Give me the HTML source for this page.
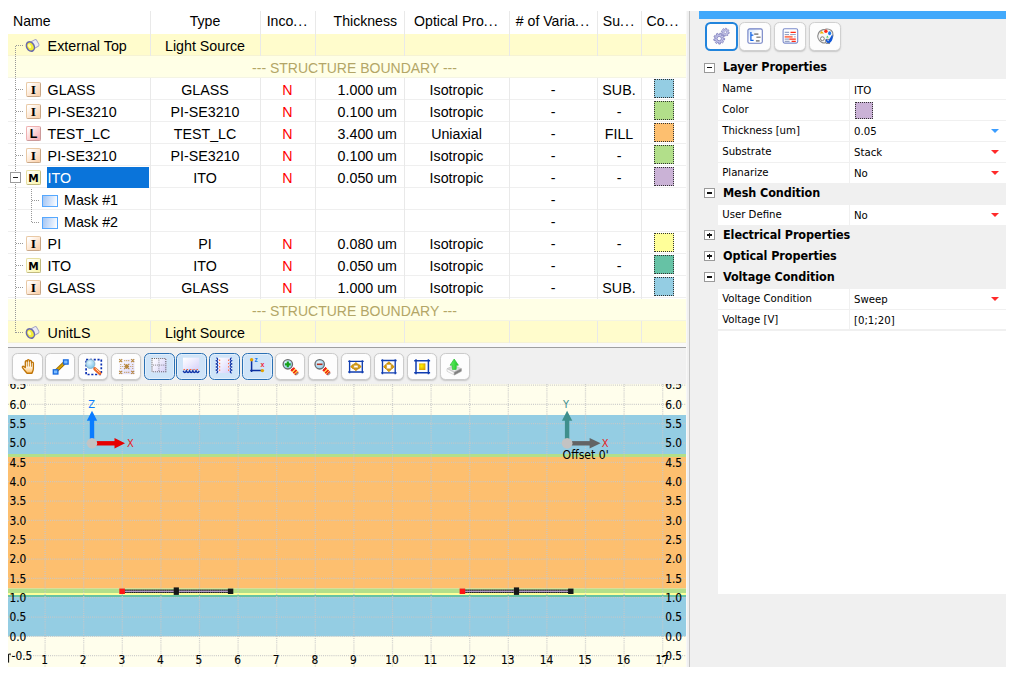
<!DOCTYPE html>
<html><head><meta charset="utf-8"><title>Layer Editor</title>
<style>
html,body{margin:0;padding:0;background:#fff;}
body{width:1016px;height:675px;position:relative;overflow:hidden;font-family:"Liberation Sans",sans-serif;}
div,span{box-sizing:border-box;}
.abs{position:absolute;}
#tbl{position:absolute;left:8px;top:11px;width:677.5px;height:331.6px;background:#fff;font-size:14.25px;color:#000;overflow:hidden;}
.hd{position:absolute;top:0;height:23px;line-height:21px;font-size:14.1px;text-align:center;white-space:nowrap;}
.vs{position:absolute;top:0;width:1px;height:331.6px;background:#e9e9e9;}
.row{position:absolute;left:0;width:677.5px;height:22.03px;border-bottom:1px solid #efefef;line-height:24.4px;white-space:nowrap;}
.row.y1{background:#fffccc;border-bottom-color:#f6f3d4;}
.row.y2{background:#ffffe6;border-bottom-color:#f4f4e4;}
.c{position:absolute;top:0;height:21px;text-align:center;}
.n{color:#ff0000;}
.sb{color:#b3a667;font-size:14px;}
.sw{position:absolute;left:646px;top:1px;width:20px;height:19px;border:1px dotted #333;}
.ic{position:absolute;left:18px;top:4px;width:15px;height:15px;border:1px solid #e9c9a5;border-right-color:#c9a787;border-bottom-color:#c9a787;border-radius:2px;font:bold 13.5px/13.8px "Liberation Serif",serif;text-align:center;color:#000;}
.ic.i{background:linear-gradient(135deg,#ffffff 10%,#fbd3ae 90%);}
.ic.l{background:linear-gradient(135deg,#ffffff 5%,#f7b1b5 90%);border-color:#efb0b0;border-right-color:#c99;border-bottom-color:#c99;font:bold 12.5px/14.6px "Liberation Sans",sans-serif;}
.ic.m{background:linear-gradient(135deg,#ffffff 5%,#fbf7b0 90%);border-color:#e6dfa0;border-right-color:#c2bb80;border-bottom-color:#c2bb80;font:bold 10.5px/14px "DejaVu Sans","Liberation Sans",sans-serif;}
.mk{position:absolute;left:34px;top:6.4px;width:16px;height:12px;border:1px solid #55a8ff;background:linear-gradient(100deg,#a4c6f4 0%,#d4e4fb 55%,#ffffff 100%);}
.nm{position:absolute;left:39.6px;top:0;font-size:14.3px;}
.e{letter-spacing:1.1px;}
.dotv{position:absolute;width:1px;background:repeating-linear-gradient(to bottom,#989898 0,#989898 1px,transparent 1px,transparent 2px);}
.doth{position:absolute;height:1px;background:repeating-linear-gradient(to right,#989898 0,#989898 1px,transparent 1px,transparent 2px);}
/* toolbar */
#tb{position:absolute;left:8px;top:348px;width:677.7px;height:36px;background:#f0f0f0;}
.bt{position:absolute;top:5.3px;width:30.2px;height:26.4px;border:1px solid #cbcbcb;border-radius:5.5px;background:#fdfdfd;box-shadow:0 1px 1.5px #c8c8c8;}
.bt.on{background:#cfe4f8;border:1.9px solid #2a70b4;box-shadow:inset 0 0 0 1px #e3effb;top:5.1px;width:31px;height:26.8px;}
.bt svg{position:absolute;left:0;top:0;}
/* right panel */
#rp{position:absolute;left:690px;top:11px;width:316px;height:656px;background:#f0f0f0;font-family:"DejaVu Sans Condensed","DejaVu Sans","Liberation Sans",sans-serif;font-stretch:condensed;font-size:11.5px;color:#000;}
.pr{position:absolute;left:28px;width:288px;height:19.8px;background:#fff;line-height:19.2px;white-space:nowrap;font-size:11.3px;}
.pr .k{position:absolute;left:4.2px;top:0;}
.pr .v{position:absolute;left:136px;top:1.4px;}
.pr .sep{position:absolute;left:131px;top:0;width:1.2px;height:21px;background:#f0f0f0;}
.ph{position:absolute;left:33px;height:19px;line-height:18.4px;font-weight:bold;font-size:12.5px;white-space:nowrap;letter-spacing:-0.08px;}
.pm{position:absolute;left:14.3px;width:10.4px;height:10.2px;border:1px solid #9a9a9a;background:#fff;}
.pm i{position:absolute;left:1.7px;top:3.4px;width:5px;height:1.5px;background:#111;}
.pm b{position:absolute;left:3.5px;top:1.6px;width:1.4px;height:5px;background:#111;}
.tri{position:absolute;left:302px;width:0;height:0;border-left:4.1px solid transparent;border-right:4.1px solid transparent;border-top:4.9px solid #ff2a2a;}
.rb{position:absolute;top:11px;width:32px;height:28.8px;border:1px solid #d0d0d0;border-radius:5.5px;background:#fdfdfd;box-shadow:0 1px 1.5px #c8c8c8;}
</style></head><body>
<div id="tbl">
<div class="hd" style="left:0px;width:142px;text-align:left;padding-left:5px">Name</div>
<div class="hd" style="left:142px;width:110px">Type</div>
<div class="hd" style="left:252px;width:55px">Inco<span class="e">...</span></div>
<div class="hd" style="left:307px;width:82px;text-align:right">Thickness</div>
<div class="hd" style="left:396px;width:105px">Optical Pro<span class="e">...</span></div>
<div class="hd" style="left:501px;width:88px"># of Varia<span class="e">...</span></div>
<div class="hd" style="left:589px;width:44px">Su<span class="e">...</span></div>
<div class="hd" style="left:633px;width:44px">Co<span class="e">...</span></div>
<div class="row y1" style="top:23.15px"><svg class="abs" style="left:17px;top:3px" width="16" height="16" viewBox="0 0 16 16"><g transform="rotate(-30 8 8)"><rect x="4.5" y="4.3" width="9" height="7.4" rx="1.6" fill="#ebebf3" stroke="#a2a2c6" stroke-width="0.9"/><ellipse cx="5" cy="8" rx="3.7" ry="4.9" fill="#f2ec38" stroke="#6a6aac" stroke-width="1.5"/><ellipse cx="4.4" cy="7.2" rx="1.4" ry="2.2" fill="#fffcae"/></g></svg><span class="nm">External Top</span><div class="c" style="left:142px;width:110px">Light Source</div><div class="c n" style="left:252px;width:55px"></div><div class="c" style="left:307px;width:82px;text-align:right"></div><div class="c" style="left:396px;width:105px"></div><div class="c" style="left:501px;width:88px"></div><div class="c" style="left:589px;width:44px"></div></div>
<div class="row y2" style="top:45.18px"><div class="c sb" style="left:16px;width:661px">--- STRUCTURE BOUNDARY ---</div></div>
<div class="row " style="top:67.21px"><span class="ic i">I</span><span class="nm">GLASS</span><div class="c" style="left:142px;width:110px">GLASS</div><div class="c n" style="left:252px;width:55px">N</div><div class="c" style="left:307px;width:82px;text-align:right">1.000 um</div><div class="c" style="left:396px;width:105px">Isotropic</div><div class="c" style="left:501px;width:88px">-</div><div class="c" style="left:589px;width:44px">SUB.</div><span class="sw" style="background:#94cde3"></span></div>
<div class="row " style="top:89.24px"><span class="ic i">I</span><span class="nm">PI-SE3210</span><div class="c" style="left:142px;width:110px">PI-SE3210</div><div class="c n" style="left:252px;width:55px">N</div><div class="c" style="left:307px;width:82px;text-align:right">0.100 um</div><div class="c" style="left:396px;width:105px">Isotropic</div><div class="c" style="left:501px;width:88px">-</div><div class="c" style="left:589px;width:44px">-</div><span class="sw" style="background:#b2df8a"></span></div>
<div class="row " style="top:111.27px"><span class="ic l">L</span><span class="nm">TEST_LC</span><div class="c" style="left:142px;width:110px">TEST_LC</div><div class="c n" style="left:252px;width:55px">N</div><div class="c" style="left:307px;width:82px;text-align:right">3.400 um</div><div class="c" style="left:396px;width:105px">Uniaxial</div><div class="c" style="left:501px;width:88px">-</div><div class="c" style="left:589px;width:44px">FILL</div><span class="sw" style="background:#fdbf6f"></span></div>
<div class="row " style="top:133.3px"><span class="ic i">I</span><span class="nm">PI-SE3210</span><div class="c" style="left:142px;width:110px">PI-SE3210</div><div class="c n" style="left:252px;width:55px">N</div><div class="c" style="left:307px;width:82px;text-align:right">0.100 um</div><div class="c" style="left:396px;width:105px">Isotropic</div><div class="c" style="left:501px;width:88px">-</div><div class="c" style="left:589px;width:44px">-</div><span class="sw" style="background:#b2df8a"></span></div>
<div class="row " style="top:155.33px"><span class="ic m">M</span><span class="abs" style="left:39px;top:1px;width:102px;height:21px;background:#0a74da"></span><span class="nm" style="color:#fff">ITO</span><div class="c" style="left:142px;width:110px">ITO</div><div class="c n" style="left:252px;width:55px">N</div><div class="c" style="left:307px;width:82px;text-align:right">0.050 um</div><div class="c" style="left:396px;width:105px">Isotropic</div><div class="c" style="left:501px;width:88px">-</div><div class="c" style="left:589px;width:44px">-</div><span class="sw" style="background:#cab2d6"></span></div>
<div class="row " style="top:177.36px"><span class="mk"></span><span class="nm" style="left:56px">Mask #1</span><div class="c" style="left:142px;width:110px"></div><div class="c n" style="left:252px;width:55px"></div><div class="c" style="left:307px;width:82px;text-align:right"></div><div class="c" style="left:396px;width:105px"></div><div class="c" style="left:501px;width:88px">-</div><div class="c" style="left:589px;width:44px"></div></div>
<div class="row " style="top:199.39px"><span class="mk"></span><span class="nm" style="left:56px">Mask #2</span><div class="c" style="left:142px;width:110px"></div><div class="c n" style="left:252px;width:55px"></div><div class="c" style="left:307px;width:82px;text-align:right"></div><div class="c" style="left:396px;width:105px"></div><div class="c" style="left:501px;width:88px">-</div><div class="c" style="left:589px;width:44px"></div></div>
<div class="row " style="top:221.42px"><span class="ic i">I</span><span class="nm">PI</span><div class="c" style="left:142px;width:110px">PI</div><div class="c n" style="left:252px;width:55px">N</div><div class="c" style="left:307px;width:82px;text-align:right">0.080 um</div><div class="c" style="left:396px;width:105px">Isotropic</div><div class="c" style="left:501px;width:88px">-</div><div class="c" style="left:589px;width:44px">-</div><span class="sw" style="background:#ffff99"></span></div>
<div class="row " style="top:243.45px"><span class="ic m">M</span><span class="nm">ITO</span><div class="c" style="left:142px;width:110px">ITO</div><div class="c n" style="left:252px;width:55px">N</div><div class="c" style="left:307px;width:82px;text-align:right">0.050 um</div><div class="c" style="left:396px;width:105px">Isotropic</div><div class="c" style="left:501px;width:88px">-</div><div class="c" style="left:589px;width:44px">-</div><span class="sw" style="background:#66c2a5"></span></div>
<div class="row " style="top:265.48px"><span class="ic i">I</span><span class="nm">GLASS</span><div class="c" style="left:142px;width:110px">GLASS</div><div class="c n" style="left:252px;width:55px">N</div><div class="c" style="left:307px;width:82px;text-align:right">1.000 um</div><div class="c" style="left:396px;width:105px">Isotropic</div><div class="c" style="left:501px;width:88px">-</div><div class="c" style="left:589px;width:44px">SUB.</div><span class="sw" style="background:#94cde3"></span></div>
<div class="row y2" style="top:287.51px"><div class="c sb" style="left:16px;width:661px">--- STRUCTURE BOUNDARY ---</div></div>
<div class="row y1" style="top:309.54px"><svg class="abs" style="left:17px;top:3px" width="16" height="16" viewBox="0 0 16 16"><g transform="rotate(-30 8 8)"><rect x="4.5" y="4.3" width="9" height="7.4" rx="1.6" fill="#ebebf3" stroke="#a2a2c6" stroke-width="0.9"/><ellipse cx="5" cy="8" rx="3.7" ry="4.9" fill="#f2ec38" stroke="#6a6aac" stroke-width="1.5"/><ellipse cx="4.4" cy="7.2" rx="1.4" ry="2.2" fill="#fffcae"/></g></svg><span class="nm">UnitLS</span><div class="c" style="left:142px;width:110px">Light Source</div><div class="c n" style="left:252px;width:55px"></div><div class="c" style="left:307px;width:82px;text-align:right"></div><div class="c" style="left:396px;width:105px"></div><div class="c" style="left:501px;width:88px"></div><div class="c" style="left:589px;width:44px"></div></div>
<div class="vs" style="left:141.5px;top:0.00px;height:45.18px"></div><div class="vs" style="left:141.5px;top:67.21px;height:220.30px"></div><div class="vs" style="left:141.5px;top:309.54px;height:22.03px"></div><div class="vs" style="left:251.5px;top:0.00px;height:45.18px"></div><div class="vs" style="left:251.5px;top:67.21px;height:220.30px"></div><div class="vs" style="left:251.5px;top:309.54px;height:22.03px"></div><div class="vs" style="left:306.5px;top:0.00px;height:45.18px"></div><div class="vs" style="left:306.5px;top:67.21px;height:220.30px"></div><div class="vs" style="left:306.5px;top:309.54px;height:22.03px"></div><div class="vs" style="left:395.5px;top:0.00px;height:45.18px"></div><div class="vs" style="left:395.5px;top:67.21px;height:220.30px"></div><div class="vs" style="left:395.5px;top:309.54px;height:22.03px"></div><div class="vs" style="left:500.5px;top:0.00px;height:45.18px"></div><div class="vs" style="left:500.5px;top:67.21px;height:220.30px"></div><div class="vs" style="left:500.5px;top:309.54px;height:22.03px"></div><div class="vs" style="left:588.5px;top:0.00px;height:45.18px"></div><div class="vs" style="left:588.5px;top:67.21px;height:220.30px"></div><div class="vs" style="left:588.5px;top:309.54px;height:22.03px"></div><div class="vs" style="left:632.5px;top:0.00px;height:45.18px"></div><div class="vs" style="left:632.5px;top:67.21px;height:220.30px"></div><div class="vs" style="left:632.5px;top:309.54px;height:22.03px"></div>
<div class="dotv" style="left:7px;top:35px;height:287px"></div><div class="doth" style="left:8px;top:34px;width:8px"></div><div class="doth" style="left:8px;top:321px;width:8px"></div><div class="doth" style="left:8px;top:78px;width:7px"></div><div class="doth" style="left:8px;top:100px;width:7px"></div><div class="doth" style="left:8px;top:122px;width:7px"></div><div class="doth" style="left:8px;top:144px;width:7px"></div><div class="doth" style="left:8px;top:232px;width:7px"></div><div class="doth" style="left:8px;top:254px;width:7px"></div><div class="doth" style="left:8px;top:276px;width:7px"></div><div class="dotv" style="left:23px;top:178px;height:33px"></div><div class="doth" style="left:24px;top:189px;width:8px"></div><div class="doth" style="left:24px;top:211px;width:8px"></div><div class="abs" style="left:2px;top:161px;width:11px;height:11px;border:1px solid #9b9b9b;background:#fff"><i class="abs" style="left:2px;top:4px;width:5px;height:1px;background:#222"></i></div></div>
<div class="abs" style="left:8px;top:342.6px;width:677.5px;height:4.4px;background:#f9f9f9"></div><div class="abs" style="left:8px;top:346.5px;width:678px;height:1.2px;background:#9f9f9f"></div>
<div id="tb">
<div class="bt" style="left:4.4px"><svg style="left:-0.64px;top:-0.50px" width="30" height="26" viewBox="0 0 30 26"><defs><linearGradient id="gh" x1="0" y1="0" x2="0" y2="1"><stop offset="0" stop-color="#fff"/><stop offset="0.55" stop-color="#fff3e0"/><stop offset="1" stop-color="#ffc060"/></linearGradient></defs><path transform="translate(8.6,5.4) scale(0.95)" d="M3.9 8.6V2.4a1.05 1.05 0 0 1 2.1 0V1.3a1.1 1.1 0 0 1 2.2 0V2.1a1.1 1.1 0 0 1 2.2 0V3.8a1 1 0 0 1 2 0V9.6c0 2.2-1 3.4-1.5 5H5.6C4.6 12.8 2.3 11 .9 8.7c-.6-1.2.7-1.9 1.6-1.1Z" fill="url(#gh)" stroke="#bf7408" stroke-width="1.4" stroke-linejoin="round"/><path transform="translate(8.6,5.4) scale(0.95)" d="M6 2.4V7.5M8.2 2V7.5M10.4 3.5V7.8" stroke="#c47a0c" stroke-width="0.9" fill="none"/></svg></div>
<div class="bt" style="left:37.3px"><svg style="left:-0.70px;top:-0.50px" width="30" height="26" viewBox="0 0 30 26"><path d="M9.3 17.8L19.6 7.7" stroke="#9c6a00" stroke-width="3.6"/><path d="M9.3 17.8L19.6 7.7" stroke="#dba400" stroke-width="1.7"/><rect x="17.5" y="5.9" width="4.6" height="4.2" fill="#7cbcff" stroke="#1568de" stroke-width="1.3"/><rect x="7.3" y="15.8" width="4.6" height="4.2" fill="#7cbcff" stroke="#1568de" stroke-width="1.3"/></svg></div>
<div class="bt" style="left:70.1px"><svg style="left:-0.36px;top:-0.50px" width="30" height="26" viewBox="0 0 30 26"><defs><radialGradient id="gg" cx="0.4" cy="0.35" r="0.7"><stop offset="0" stop-color="#e4f7ff"/><stop offset="1" stop-color="#79c2e8"/></radialGradient></defs><rect x="7.1" y="5.6" width="15.2" height="14.9" fill="#fff" stroke="#0a2fb2" stroke-width="1.7" stroke-dasharray="2.1 1.7"/><path d="M14.2 13.2L16.4 15.2" stroke="#999" stroke-width="1.6"/><path d="M16 14.9L20.8 19.3" stroke="#ee6a2a" stroke-width="3.4" stroke-linecap="round"/><path d="M16.4 14.6L20.8 18.5" stroke="#ffe0b0" stroke-width="1"/><circle cx="11.4" cy="10" r="4.5" fill="url(#gg)" stroke="#8fb3c6" stroke-width="0.9"/></svg></div>
<div class="bt" style="left:103.0px"><svg style="left:-0.18px;top:-0.50px" width="30" height="26" viewBox="0 0 30 26"><defs><linearGradient id="g4" x1="0" y1="0" x2="1" y2="1"><stop offset="0" stop-color="#fdfdff"/><stop offset="1" stop-color="#dcd8fa"/></linearGradient></defs><rect x="7" y="5" width="15.4" height="15.2" fill="url(#g4)"/><path d="M7.199999999999999 5.2L10.2 8.2M10.2 5.2L7.199999999999999 8.2M7.199999999999999 16.9L10.2 19.9M10.2 16.9L7.199999999999999 19.9M19.2 5.2L22.2 8.2M22.2 5.2L19.2 8.2M19.2 16.9L22.2 19.9M22.2 16.9L19.2 19.9M12.1 9.9L17.3 15.1M17.3 9.9L12.1 15.1M12.3 12.5H17.1M14.7 10.1V14.9" stroke="#ad7417" stroke-width="1.1" fill="none" opacity="0.85"/><path d="M12.1 6.7h1.2M14.1 6.7h1.2M16.099999999999998 6.7h1.2M12.1 18.4h1.2M14.1 18.4h1.2M16.099999999999998 18.4h1.2M8.1 10.5h1.2M8.1 12.5h1.2M8.1 14.5h1.2M20.099999999999998 10.5h1.2M20.099999999999998 12.5h1.2M20.099999999999998 14.5h1.2M10.1 12.5h1.2M18.099999999999998 12.5h1.2" stroke="#b98a3c" stroke-width="1.2" opacity="0.7"/></svg></div>
<div class="bt on" style="left:135.9px"><svg style="left:-2.08px;top:-1.90px" width="31" height="27" viewBox="0 0 31 27"><defs><linearGradient id="g5" x1="0" y1="0" x2="1" y2="0.6"><stop offset="0" stop-color="#ffffff"/><stop offset="0.45" stop-color="#f2f0fe"/><stop offset="1" stop-color="#d9d5f8"/></linearGradient></defs><rect x="8.4" y="5.9" width="15" height="14.4" fill="url(#g5)"/><rect x="9" y="6.5" width="13.8" height="13.2" fill="none" stroke="#4a4a4a" stroke-width="1.15" stroke-dasharray="1.05 1" opacity="0.8"/><path d="M15.9 7.6V19M10 13.1H22" stroke="#5a5a5a" stroke-width="1.1" stroke-dasharray="1.05 1" opacity="0.55"/></svg></div>
<div class="bt on" style="left:168.1px"><svg style="left:-1.20px;top:-1.90px" width="31" height="27" viewBox="0 0 31 27"><defs><linearGradient id="g6" x1="0" y1="0" x2="1" y2="1"><stop offset="0" stop-color="#ffffff"/><stop offset="0.4" stop-color="#f0eefe"/><stop offset="1" stop-color="#d5d1f8"/></linearGradient></defs><rect x="7" y="5.7" width="16.2" height="12" fill="url(#g6)"/><rect x="7.6" y="17" width="1.3" height="1.1" fill="#ff5a2a"/><rect x="10.8" y="17" width="1.3" height="1.1" fill="#ff5a2a"/><rect x="14.1" y="17" width="1.3" height="1.1" fill="#ff5a2a"/><rect x="17.4" y="17" width="1.3" height="1.1" fill="#ff5a2a"/><rect x="20.6" y="17" width="1.3" height="1.1" fill="#ff5a2a"/><path d="M7.2 18.9q1.6 3.2 3.2 0q1.6 3.2 3.2 0q1.6 3.2 3.2 0q1.6 3.2 3.2 0q1.6 3.2 3.2 0" stroke="#0f35a8" stroke-width="1.5" fill="#fff"/></svg></div>
<div class="bt on" style="left:201.0px"><svg style="left:-1.96px;top:-1.90px" width="31" height="27" viewBox="0 0 31 27"><defs><linearGradient id="g7" x1="0" y1="0" x2="1" y2="1"><stop offset="0" stop-color="#ffffff"/><stop offset="0.4" stop-color="#f0eefe"/><stop offset="1" stop-color="#d5d1f8"/></linearGradient></defs><rect x="9" y="5.7" width="14" height="15.3" fill="url(#g7)"/><rect x="11" y="7.6" width="1.2" height="1.3" fill="#ff6a3a"/><rect x="11" y="10.9" width="1.2" height="1.3" fill="#ff6a3a"/><rect x="11" y="14.2" width="1.2" height="1.3" fill="#ff6a3a"/><rect x="11" y="17.5" width="1.2" height="1.3" fill="#ff6a3a"/><rect x="20" y="7.6" width="1.2" height="1.3" fill="#ff6a3a"/><rect x="20" y="10.9" width="1.2" height="1.3" fill="#ff6a3a"/><rect x="20" y="14.2" width="1.2" height="1.3" fill="#ff6a3a"/><rect x="20" y="17.5" width="1.2" height="1.3" fill="#ff6a3a"/><path d="M8.4 5.7q2.6 1.55 0 3.1q2.6 1.55 0 3.1q2.6 1.55 0 3.1q2.6 1.55 0 3.1q2.6 1.55 0 3.1" stroke="#0f35a8" stroke-width="1.25" fill="#fff"/><path d="M23.6 5.7q-2.6 1.55 0 3.1q-2.6 1.55 0 3.1q-2.6 1.55 0 3.1q-2.6 1.55 0 3.1q-2.6 1.55 0 3.1" stroke="#0f35a8" stroke-width="1.25" fill="#fff"/></svg></div>
<div class="bt on" style="left:233.8px"><svg style="left:-1.72px;top:-1.90px" width="31" height="27" viewBox="0 0 31 27"><path d="M10.6 7.6V20M9.2 18.6H21" stroke="#0b2fa0" stroke-width="1.5" fill="none"/><circle cx="10.6" cy="7.7" r="1.7" fill="#e3a400"/><circle cx="21.4" cy="18.6" r="1.7" fill="#e3a400"/><text x="13.6" y="9.6" font-size="6.5" font-weight="bold" font-family="Liberation Sans, sans-serif" fill="#1a7ae8">z</text><text x="19.6" y="15.2" font-size="7" font-weight="bold" font-family="Liberation Sans, sans-serif" fill="#f02838">x</text></svg></div>
<div class="bt" style="left:267.3px"><svg style="left:-0.88px;top:-0.50px" width="30" height="26" viewBox="0 0 30 26"><defs><radialGradient id="m9" cx="0.4" cy="0.35" r="0.75"><stop offset="0" stop-color="#e6f8ff"/><stop offset="1" stop-color="#82c6ea"/></radialGradient><linearGradient id="m9h" x1="0" y1="0" x2="1" y2="0"><stop offset="0" stop-color="#f6f6f6"/><stop offset="0.16" stop-color="#f6f6f6"/><stop offset="0.17" stop-color="#f02818"/><stop offset="0.36" stop-color="#f02818"/><stop offset="0.37" stop-color="#ffc848"/><stop offset="0.52" stop-color="#ffc848"/><stop offset="0.53" stop-color="#f02818"/><stop offset="0.7" stop-color="#f02818"/><stop offset="0.71" stop-color="#ffb838"/><stop offset="0.84" stop-color="#ffb838"/><stop offset="0.85" stop-color="#f02818"/><stop offset="1" stop-color="#c02010"/></linearGradient></defs><g transform="translate(14.9,12.4) rotate(46)"><rect x="0" y="-1.2" width="2.6" height="2.4" fill="#b9b9b9"/><rect x="1.9" y="-2.3" width="8.4" height="4.6" rx="0.6" fill="url(#m9h)"/><rect x="9.6" y="-1.5" width="1.6" height="3" fill="#9a9a9a"/></g><circle cx="12.8" cy="10.3" r="4.7" fill="url(#m9)" stroke="#6c6c6c" stroke-width="1.3"/><path d="M9.9 10.3H15.7M12.8 7.4V13.2" stroke="#12a018" stroke-width="2.2"/></svg></div>
<div class="bt" style="left:300.1px"><svg style="left:-1.64px;top:-0.50px" width="30" height="26" viewBox="0 0 30 26"><defs><radialGradient id="m10" cx="0.4" cy="0.35" r="0.75"><stop offset="0" stop-color="#e6f8ff"/><stop offset="1" stop-color="#82c6ea"/></radialGradient><linearGradient id="m10h" x1="0" y1="0" x2="1" y2="0"><stop offset="0" stop-color="#f6f6f6"/><stop offset="0.16" stop-color="#f6f6f6"/><stop offset="0.17" stop-color="#f02818"/><stop offset="0.36" stop-color="#f02818"/><stop offset="0.37" stop-color="#ffc848"/><stop offset="0.52" stop-color="#ffc848"/><stop offset="0.53" stop-color="#f02818"/><stop offset="0.7" stop-color="#f02818"/><stop offset="0.71" stop-color="#ffb838"/><stop offset="0.84" stop-color="#ffb838"/><stop offset="0.85" stop-color="#f02818"/><stop offset="1" stop-color="#c02010"/></linearGradient></defs><g transform="translate(14.799999999999999,12.4) rotate(46)"><rect x="0" y="-1.2" width="2.6" height="2.4" fill="#b9b9b9"/><rect x="1.9" y="-2.3" width="8.4" height="4.6" rx="0.6" fill="url(#m10h)"/><rect x="9.6" y="-1.5" width="1.6" height="3" fill="#9a9a9a"/></g><circle cx="12.7" cy="10.3" r="4.7" fill="url(#m10)" stroke="#6c6c6c" stroke-width="1.3"/><path d="M9.9 10.3H15.5" stroke="#b43222" stroke-width="1.6"/></svg></div>
<div class="bt" style="left:333.0px"><svg style="left:-1.40px;top:-0.50px" width="30" height="26" viewBox="0 0 30 26"><path d="M8.6 6.2V19.3M21.3 6.2V19.3M7.2 7.3H22.7M7.2 18H22.7" stroke="#0f3cb0" stroke-width="1.35" fill="none"/><path d="M9.7 12.6L12.3 10.3V14.9ZM20.2 12.6L17.6 10.3V14.9ZM14.9 8.5L17.1 10.6H12.7ZM14.9 16.7L17.1 14.6H12.7Z" fill="#eaa800" stroke="#b87c00" stroke-width="0.8" stroke-linejoin="round"/><rect x="12.9" y="11.5" width="4.1" height="2.2" fill="#fff" stroke="#d09000" stroke-width="0.5"/></svg></div>
<div class="bt" style="left:365.9px"><svg style="left:-1.06px;top:-0.50px" width="30" height="26" viewBox="0 0 30 26"><path d="M8.5 5.2V20.3M21.2 5.2V20.3M7.1 6.5H22.6M7.1 18.8H22.6" stroke="#0f3cb0" stroke-width="1.35" fill="none"/><path d="M9.6 12.7L12.1 10.4V15ZM20.2 12.7L17.7 10.4V15ZM14.9 7.7L17.2 10H12.6ZM14.9 17.7L17.2 15.4H12.6Z" fill="#eaa800" stroke="#b87c00" stroke-width="0.8" stroke-linejoin="round"/><rect x="12.8" y="10.6" width="4.2" height="4.2" fill="#fff" stroke="#d09000" stroke-width="0.5"/></svg></div>
<div class="bt" style="left:398.7px"><svg style="left:0.08px;top:-0.50px" width="30" height="26" viewBox="0 0 30 26"><defs><radialGradient id="g13" cx="0.4" cy="0.4" r="0.7"><stop offset="0" stop-color="#fff200"/><stop offset="1" stop-color="#d89c00"/></radialGradient></defs><path d="M8 5.2V20.3M20.4 5.2V20.3M6.2 6.8H22.1M6.2 18.8H22.1" stroke="#0f3cb0" stroke-width="1.5" fill="none"/><rect x="11.1" y="9.4" width="6.3" height="6.6" fill="url(#g13)"/></svg></div>
<div class="bt" style="left:431.6px"><svg style="left:-0.68px;top:-0.50px" width="30" height="26" viewBox="0 0 30 26"><defs><linearGradient id="g14" x1="0" y1="0" x2="1" y2="0"><stop offset="0" stop-color="#66f266"/><stop offset="1" stop-color="#1ec626"/></linearGradient></defs><path d="M7 14.7L14.2 11.2L21.3 14.7L14.3 18.5Z" fill="#d4d4d4" stroke="#bdbdbd" stroke-width="0.6"/><path d="M7 14.7L14.3 18.5V21L7 17.3Z" fill="#fafafa" stroke="#c4c4c4" stroke-width="0.6"/><path d="M14.3 18.5L21.3 14.7V17.3L14.3 21Z" fill="#7e7e7e" stroke="#909090" stroke-width="0.6"/><path d="M10.2 15.1L14.2 13.2L18 15.1L14.3 17Z" fill="#f6f6f6"/><path d="M14.2 5L18.4 11.2H16.2V15.4H12.3V11.2H10.1Z" fill="url(#g14)" stroke="#28c030" stroke-width="0.7" stroke-linejoin="round"/></svg></div>
</div>
<svg class="abs" style="left:8px;top:384px" width="678" height="283" viewBox="0 0 678 283" font-family="DejaVu Sans Condensed, DejaVu Sans, Liberation Sans, sans-serif" font-stretch="condensed">
<rect x="0" y="0" width="678" height="283" fill="#fffeec"/>
<rect x="0" y="31.0" width="678" height="39.0" fill="#94cde3"/>
<rect x="0" y="70.0" width="678" height="3.0" fill="#b2df8a"/>
<rect x="0" y="73.0" width="678" height="131.5" fill="#fdbf6f"/>
<rect x="0" y="204.5" width="678" height="4.5" fill="#b2df8a"/>
<rect x="0" y="209.0" width="678" height="2.0" fill="#ffff99"/>
<rect x="0" y="211.0" width="678" height="2.0" fill="#66c2a5"/>
<rect x="0" y="213.0" width="678" height="39.3" fill="#94cde3"/>
<path d="M37.1 0V283 M75.7 0V283 M114.3 0V283 M152.9 0V283 M191.5 0V283 M230.1 0V283 M268.7 0V283 M307.3 0V283 M345.9 0V283 M384.5 0V283 M423.1 0V283 M461.7 0V283 M500.3 0V283 M538.9 0V283 M577.5 0V283 M616.1 0V283 M654.7 0V283 M0 1.1H678 M0 20.4H678 M0 39.7H678 M0 59.0H678 M0 78.4H678 M0 97.7H678 M0 117.0H678 M0 136.3H678 M0 155.7H678 M0 175.0H678 M0 194.3H678 M0 213.6H678 M0 233.0H678 M0 252.3H678 M0 271.6H678" stroke="#c8c8c8" stroke-width="1.25" stroke-dasharray="1 1.1" fill="none" opacity="0.9"/>
<rect x="114.0" y="205.6" width="108.5" height="3.4" fill="#1a1a1a"/><rect x="114.0" y="206.7" width="108.5" height="1.2" fill="#c3a7da"/><path d="M114.0 206.2H222.5M114.0 208.4H222.5" stroke="#bbb" stroke-width="1" stroke-dasharray="1 1.2" opacity="0.55"/><rect x="111.3" y="204.5" width="5.6" height="5.5" fill="#ff1414"/><rect x="165.7" y="203.4" width="5.2" height="7.5" fill="#161616"/><rect x="219.9" y="204.6" width="5.4" height="5.4" fill="#161616"/>
<rect x="454.3" y="205.6" width="108.4" height="3.4" fill="#1a1a1a"/><rect x="454.3" y="206.7" width="108.4" height="1.2" fill="#c3a7da"/><path d="M454.3 206.2H562.7M454.3 208.4H562.7" stroke="#bbb" stroke-width="1" stroke-dasharray="1 1.2" opacity="0.55"/><rect x="451.6" y="204.5" width="5.6" height="5.5" fill="#ff1414"/><rect x="505.9" y="203.4" width="5.2" height="7.5" fill="#161616"/><rect x="560.1" y="204.6" width="5.4" height="5.4" fill="#161616"/>
<rect x="81.8" y="35.3" width="4.4" height="20" fill="#0a7cff"/><path d="M78.8 36.8L84.0 26.8L89.2 36.8Z" fill="#0a7cff"/><rect x="88.0" y="57.1" width="20" height="4.4" fill="#e60000"/><path d="M106.5 54.1L117.0 59.3L106.5 64.5Z" fill="#e60000"/><circle cx="84.0" cy="59.3" r="5.2" fill="#c3c3c3"/><text x="83.6" y="23.7" font-size="11" fill="#0a7cff" text-anchor="middle">Z</text><text x="122.5" y="63.3" font-size="11" fill="#e61a1a" text-anchor="middle">X</text>
<rect x="556.9" y="35.3" width="4.4" height="20" fill="#3f8f8c"/><path d="M553.9 36.8L559.1 26.8L564.3 36.8Z" fill="#3f8f8c"/><rect x="563.1" y="57.1" width="20" height="4.4" fill="#636363"/><path d="M581.6 54.1L592.6 59.3L581.6 64.5Z" fill="#636363"/><circle cx="559.1" cy="59.3" r="5.4" fill="#c3c3c3"/><text x="558.1" y="24.3" font-size="11" fill="#3f8f8c" text-anchor="middle">Y</text><text x="597.1" y="63.3" font-size="11" fill="#e61a1a" text-anchor="middle">X</text><text x="554.6" y="74.7" font-size="12.1" fill="#000">Offset 0'</text>
<g font-size="11.8" fill="#000" stroke="#000" stroke-width="0.12"><text x="1.5" y="5.3">6.5</text><text x="674" y="5.3" text-anchor="end">6.5</text><text x="1.5" y="24.6">6.0</text><text x="674" y="24.6" text-anchor="end">6.0</text><text x="1.5" y="43.9">5.5</text><text x="674" y="43.9" text-anchor="end">5.5</text><text x="1.5" y="63.2">5.0</text><text x="674" y="63.2" text-anchor="end">5.0</text><text x="1.5" y="82.6">4.5</text><text x="674" y="82.6" text-anchor="end">4.5</text><text x="1.5" y="101.9">4.0</text><text x="674" y="101.9" text-anchor="end">4.0</text><text x="1.5" y="121.2">3.5</text><text x="674" y="121.2" text-anchor="end">3.5</text><text x="1.5" y="140.5">3.0</text><text x="674" y="140.5" text-anchor="end">3.0</text><text x="1.5" y="159.9">2.5</text><text x="674" y="159.9" text-anchor="end">2.5</text><text x="1.5" y="179.2">2.0</text><text x="674" y="179.2" text-anchor="end">2.0</text><text x="1.5" y="198.5">1.5</text><text x="674" y="198.5" text-anchor="end">1.5</text><text x="1.5" y="217.8">1.0</text><text x="674" y="217.8" text-anchor="end">1.0</text><text x="1.5" y="237.2">0.5</text><text x="674" y="237.2" text-anchor="end">0.5</text><text x="1.5" y="256.5">0.0</text><text x="674" y="256.5" text-anchor="end">0.0</text>
<text x="3.6" y="275.6">-0.5</text><text x="674" y="275.6" text-anchor="end">-0.5</text><path d="M0.6 278.6V270.1H3" stroke="#000" stroke-width="1" fill="none"/><text x="36.6" y="279.9" text-anchor="middle">1</text><text x="75.2" y="279.9" text-anchor="middle">2</text><text x="113.8" y="279.9" text-anchor="middle">3</text><text x="152.4" y="279.9" text-anchor="middle">4</text><text x="191.0" y="279.9" text-anchor="middle">5</text><text x="229.6" y="279.9" text-anchor="middle">6</text><text x="268.2" y="279.9" text-anchor="middle">7</text><text x="306.8" y="279.9" text-anchor="middle">8</text><text x="345.4" y="279.9" text-anchor="middle">9</text><text x="384.0" y="279.9" text-anchor="middle">10</text><text x="422.6" y="279.9" text-anchor="middle">11</text><text x="461.2" y="279.9" text-anchor="middle">12</text><text x="499.8" y="279.9" text-anchor="middle">13</text><text x="538.4" y="279.9" text-anchor="middle">14</text><text x="577.0" y="279.9" text-anchor="middle">15</text><text x="615.6" y="279.9" text-anchor="middle">16</text><text x="654.2" y="279.9" text-anchor="middle">17</text></g>
</svg>
<div class="abs" style="left:685.7px;top:11px;width:1.6px;height:656px;background:#f8f8f8"></div><div class="abs" style="left:687px;top:11px;width:3px;height:656px;background:#f0f0f0"></div><div class="abs" style="left:689px;top:11px;width:1.2px;height:656px;background:#c4c4c4"></div>
<div id="rp">
<div class="abs" style="left:9px;top:0;width:307px;height:7.8px;background:#42a9fb"></div>
<div class="rb" style="left:14.6px;width:33.2px;border:2.1px solid #2184dc;background:#fdfdfd;box-shadow:none;"><svg class="abs" style="left:-2.1px;top:-2.1px" width="33" height="29" viewBox="0 0 33 29"><path d="M24.30 10.31L24.03 11.66L22.82 11.42L22.38 12.08L23.05 13.10L21.90 13.86L21.22 12.85L20.44 13.00L20.19 14.20L18.84 13.93L19.08 12.72L18.42 12.28L17.40 12.95L16.64 11.80L17.65 11.12L17.50 10.34L16.30 10.09L16.57 8.74L17.78 8.98L18.22 8.32L17.55 7.30L18.70 6.54L19.38 7.55L20.16 7.40L20.41 6.20L21.76 6.47L21.52 7.68L22.18 8.12L23.20 7.45L23.96 8.60L22.95 9.28L23.10 10.06Z" fill="#c9c9ea" stroke="#8a8ac2" stroke-width="0.8" stroke-linejoin="round"/><circle cx="20.3" cy="10.2" r="1.35" fill="#f4f4fb" stroke="#8a8ac2" stroke-width="0.7"/><path d="M19.69 16.31L19.52 17.98L17.90 17.84L17.47 18.72L18.60 19.90L17.39 21.08L16.24 19.93L15.34 20.33L15.44 21.96L13.77 22.08L13.62 20.46L12.68 20.19L11.71 21.50L10.34 20.52L11.28 19.18L10.73 18.37L9.14 18.76L8.73 17.12L10.30 16.70L10.40 15.73L8.94 15.00L9.67 13.48L11.15 14.17L11.85 13.49L11.20 11.99L12.73 11.30L13.42 12.78L14.40 12.71L14.86 11.14L16.48 11.60L16.06 13.17L16.86 13.74L18.22 12.84L19.17 14.23L17.83 15.17L18.07 16.12Z" fill="#c3c3e8" stroke="#8282be" stroke-width="0.9" stroke-linejoin="round"/><circle cx="14.2" cy="16.6" r="2.2" fill="#fafafd" stroke="#8282be" stroke-width="0.9"/></svg></div>
<div class="rb" style="left:49.4px;width:32px;"><svg class="abs" style="left:-1.0px;top:-1.0px" width="33" height="29" viewBox="0 0 33 29"><defs><linearGradient id="r2" x1="0" y1="0" x2="1" y2="1"><stop offset="0" stop-color="#cfe2fb"/><stop offset="0.5" stop-color="#ffffff"/><stop offset="1" stop-color="#ffffff"/></linearGradient></defs><rect x="8.9" y="6.9" width="14.4" height="14.4" rx="1.6" fill="url(#r2)" stroke="#6f7fc4" stroke-width="1.1"/><path d="M11.9 10.1V18.4H14.6M11.9 13.1H14.4" stroke="#0f62e4" stroke-width="1.25" fill="none"/><path d="M15.2 12.1H19.4M17.4 15.3H21.6M16.9 18.9H20.6" stroke="#8e8e8e" stroke-width="1.6"/></svg></div>
<div class="rb" style="left:84.3px;width:32.1px;"><svg class="abs" style="left:-1.0px;top:-1.0px" width="33" height="29" viewBox="0 0 33 29"><rect x="9.1" y="6.8" width="14.6" height="14.3" rx="1.6" fill="#fff" stroke="#7b8bcb" stroke-width="1.1"/><path d="M10.7 10.3H15.2M10.7 12.5H15M16.2 12.5H21.8M10.7 17.2H15M10.7 19.3H15.6" stroke="#97a3c4" stroke-width="1.2"/><path d="M16.5 10.3H21.8M15.2 17.2H21.8M17.6 19.3H21.8" stroke="#ff2a14" stroke-width="1.3"/><path d="M10.7 14.8H18.6" stroke="#ff7a5c" stroke-width="1.9"/><path d="M19.8 14.8H21.8" stroke="#b9c0d4" stroke-width="1.3"/></svg></div>
<div class="rb" style="left:118.6px;width:32px;"><svg class="abs" style="left:-1.0px;top:-1.0px" width="33" height="29" viewBox="0 0 33 29"><path d="M16.5 7.2C21.5 6.2 24.6 9.6 24 13.4C23.6 16.6 21 18 18.8 17.4C17 16.9 16.2 18 16.8 19.4C17.4 21 15 21.6 12.6 20.2C9 18.2 8 14.4 9.6 11C10.9 8.6 13.6 7.6 16.5 7.2Z" fill="#f6f6f6" stroke="#8c8c8c" stroke-width="1.2"/><circle cx="13.4" cy="16.7" r="1.9" fill="#fff" stroke="#7a7a7a" stroke-width="1"/><path d="M10.6 11.6L12.6 9L15 11.6Z" fill="#f0b400"/><circle cx="16.9" cy="9.3" r="1.7" fill="#ff2a14"/><ellipse cx="20.6" cy="11.3" rx="1.5" ry="2" fill="#1a7af0"/><path d="M17 15.4L18.6 13.6L19.6 15.8Z" fill="#58d068"/><path d="M17.3 16.8L19.2 19.2L23.2 12.6C24.4 15.4 23.6 19.6 20.2 21.2C18.6 21.6 17.2 20.4 16.9 18.6Z" fill="#0f56d8"/><path d="M16.9 21.4H21" stroke="#777" stroke-width="0.9"/></svg></div>
<div class="abs" style="left:28px;top:68px;width:288px;height:515px;background:#fff"></div>
<div class="abs" style="left:9px;top:47.2px;width:307px;height:21.1px;background:#f0f0f0"></div><div class="pm" style="top:51.5px"><i></i></div><div class="ph" style="top:47.2px">Layer Properties</div>
<div class="pr" style="top:68.2px"><span class="k">Name</span><span class="sep"></span><span class="v">ITO</span></div><div class="abs" style="left:28px;top:88.0px;width:288px;height:1.2px;background:#f0f0f0"></div>
<div class="pr" style="top:89.2px"><span class="k">Color</span><span class="sep"></span><span class="abs" style="left:137px;top:1.5px;width:18px;height:17px;border:1px dotted #333;background:#cab2d6"></span></div><div class="abs" style="left:28px;top:109.0px;width:288px;height:1.2px;background:#f0f0f0"></div>
<div class="pr" style="top:110.1px"><span class="k">Thickness [um]</span><span class="sep"></span><span class="v">0.05</span><span class="tri" style="left:273.4px;top:8px;border-top-color:#3b9dff"></span></div><div class="abs" style="left:28px;top:129.9px;width:288px;height:1.2px;background:#f0f0f0"></div>
<div class="pr" style="top:131.1px"><span class="k">Substrate</span><span class="sep"></span><span class="v">Stack</span><span class="tri" style="left:273.4px;top:8px;border-top-color:#ff2a2a"></span></div><div class="abs" style="left:28px;top:150.9px;width:288px;height:1.2px;background:#f0f0f0"></div>
<div class="pr" style="top:152.0px"><span class="k">Planarize</span><span class="sep"></span><span class="v">No</span><span class="tri" style="left:273.4px;top:8px;border-top-color:#ff2a2a"></span></div><div class="abs" style="left:28px;top:171.8px;width:288px;height:1.2px;background:#f0f0f0"></div>
<div class="abs" style="left:9px;top:172.9px;width:307px;height:21.1px;background:#f0f0f0"></div><div class="pm" style="top:177.1px"><i></i></div><div class="ph" style="top:172.9px">Mesh Condition</div>
<div class="pr" style="top:193.9px"><span class="k">User Define</span><span class="sep"></span><span class="v">No</span><span class="tri" style="left:273.4px;top:8px;border-top-color:#ff2a2a"></span></div><div class="abs" style="left:28px;top:213.7px;width:288px;height:1.2px;background:#f0f0f0"></div>
<div class="abs" style="left:9px;top:214.8px;width:307px;height:21.1px;background:#f0f0f0"></div><div class="pm" style="top:219.0px"><i></i><b></b></div><div class="ph" style="top:214.8px">Electrical Properties</div>
<div class="abs" style="left:9px;top:235.8px;width:307px;height:21.1px;background:#f0f0f0"></div><div class="pm" style="top:240.0px"><i></i><b></b></div><div class="ph" style="top:235.8px">Optical Properties</div>
<div class="abs" style="left:9px;top:256.8px;width:307px;height:21.1px;background:#f0f0f0"></div><div class="pm" style="top:260.9px"><i></i></div><div class="ph" style="top:256.8px">Voltage Condition</div>
<div class="pr" style="top:277.7px"><span class="k">Voltage Condition</span><span class="sep"></span><span class="v">Sweep</span><span class="tri" style="left:273.4px;top:8px;border-top-color:#ff2a2a"></span></div><div class="abs" style="left:28px;top:297.5px;width:288px;height:1.2px;background:#f0f0f0"></div>
<div class="pr" style="top:298.6px"><span class="k">Voltage [V]</span><span class="sep"></span><span class="v">[0;1;20]</span></div><div class="abs" style="left:28px;top:318.4px;width:288px;height:1.2px;background:#f0f0f0"></div>
</div>
</body></html>
